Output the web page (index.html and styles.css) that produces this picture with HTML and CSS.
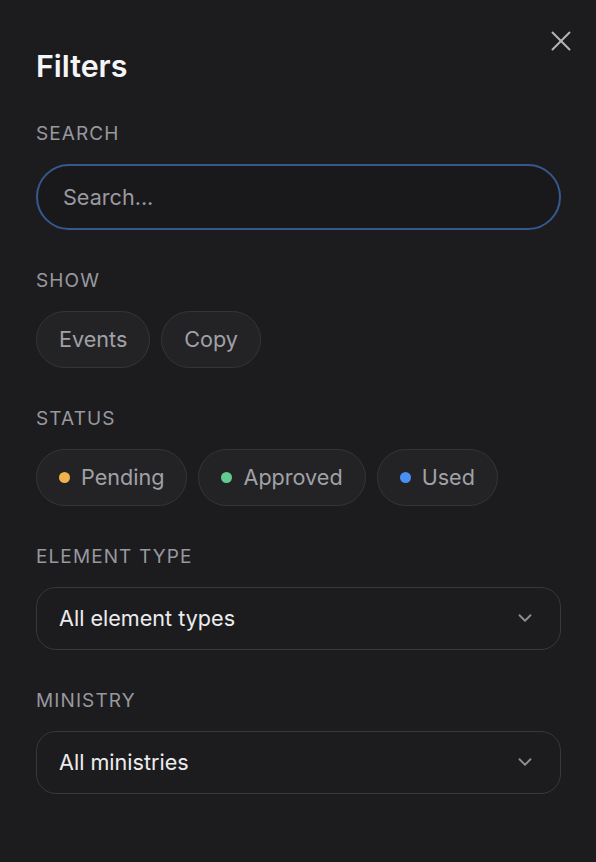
FILE: index.html
```html
<!DOCTYPE html>
<html>
<head>
    <title>Filters</title>
    <link rel="stylesheet" href="styles.css">
</head>
<body>
    <div class="filter-panel">
        <button class="close-btn" aria-label="Close">
            <svg width="34" height="34" viewBox="0 0 24 24" fill="none" stroke="currentColor" stroke-width="1.4" stroke-linecap="round">
                <path d="M18 6 6 18"/>
                <path d="m6 6 12 12"/>
            </svg>
        </button>
        <h1>Filters</h1>

        <div class="section">
            <div class="label">Search</div>
            <input type="text" class="search-input" placeholder="Search...">
        </div>

        <div class="section">
            <div class="label">Show</div>
            <div class="chips">
                <button class="chip">Events</button>
                <button class="chip">Copy</button>
            </div>
        </div>

        <div class="section">
            <div class="label">Status</div>
            <div class="chips">
                <button class="chip"><span class="dot pending"></span>Pending</button>
                <button class="chip"><span class="dot approved"></span>Approved</button>
                <button class="chip"><span class="dot used"></span>Used</button>
            </div>
        </div>

        <div class="section">
            <div class="label">Element type</div>
            <div class="select">
                <span>All element types</span>
                <svg width="22" height="22" viewBox="0 0 24 24" fill="none" stroke="currentColor" stroke-width="2" stroke-linecap="round" stroke-linejoin="round">
                    <path d="m6 9 6 6 6-6"/>
                </svg>
            </div>
        </div>

        <div class="section">
            <div class="label">Ministry</div>
            <div class="select">
                <span>All ministries</span>
                <svg width="22" height="22" viewBox="0 0 24 24" fill="none" stroke="currentColor" stroke-width="2" stroke-linecap="round" stroke-linejoin="round">
                    <path d="m6 9 6 6 6-6"/>
                </svg>
            </div>
        </div>
    </div>
</body>
</html>
```

FILE: styles.css
```css
/* Filter panel */
body {
    margin: 0;
    background-color: #1c1c1e;
    font-family: "Inter", "Noto Sans", sans-serif;
    color: #f2f2f4;
}

.filter-panel {
    position: relative;
    padding: 48px 35px 0 36px;
    height: 862px;
    box-sizing: border-box;
}

.close-btn {
    position: absolute;
    top: 24px;
    right: 18px;
    padding: 0;
    border: none;
    background: none;
    color: #b4b4b8;
    cursor: pointer;
    display: flex;
}

h1 {
    margin: 0 0 37px 0;
    font-size: 30.4px;
    line-height: 37px;
    font-weight: 600;
    color: #f5f5f7;
}

.section {
    margin-bottom: 38.6px;
}

.label {
    font-size: 19px;
    line-height: 24px;
    letter-spacing: 0.058em;
    text-transform: uppercase;
    color: #98989e;
    margin-bottom: 18px;
}

.search-input {
    display: block;
    width: 100%;
    height: 66px;
    box-sizing: border-box;
    padding: 0 25px;
    border: 2px solid #35598f;
    border-radius: 34px;
    background-color: #19191b;
    font-family: inherit;
    font-size: 21.6px;
    color: #f2f2f4;
    outline: none;
}

.search-input::placeholder {
    color: #9a9aa0;
}

.chips {
    display: flex;
    gap: 11px;
}

.chip {
    display: flex;
    align-items: center;
    gap: 11px;
    height: 57.4px;
    padding: 0 22px;
    border: 1px solid #353538;
    border-radius: 29px;
    background-color: #232326;
    font-family: inherit;
    font-size: 21.6px;
    color: #a1a1a6;
    cursor: pointer;
}

.dot {
    width: 11px;
    height: 11px;
    border-radius: 50%;
}

.dot.pending {
    background-color: #f0b24c;
}

.dot.approved {
    background-color: #62cc8e;
}

.dot.used {
    background-color: #4a90f2;
}

.select {
    display: flex;
    align-items: center;
    justify-content: space-between;
    height: 63.5px;
    box-sizing: border-box;
    padding: 0 24px 0 22px;
    border: 1px solid #38383c;
    border-radius: 20px;
    font-size: 21.6px;
    color: #ececee;
}

.select svg {
    color: #8e8e93;
}
```
